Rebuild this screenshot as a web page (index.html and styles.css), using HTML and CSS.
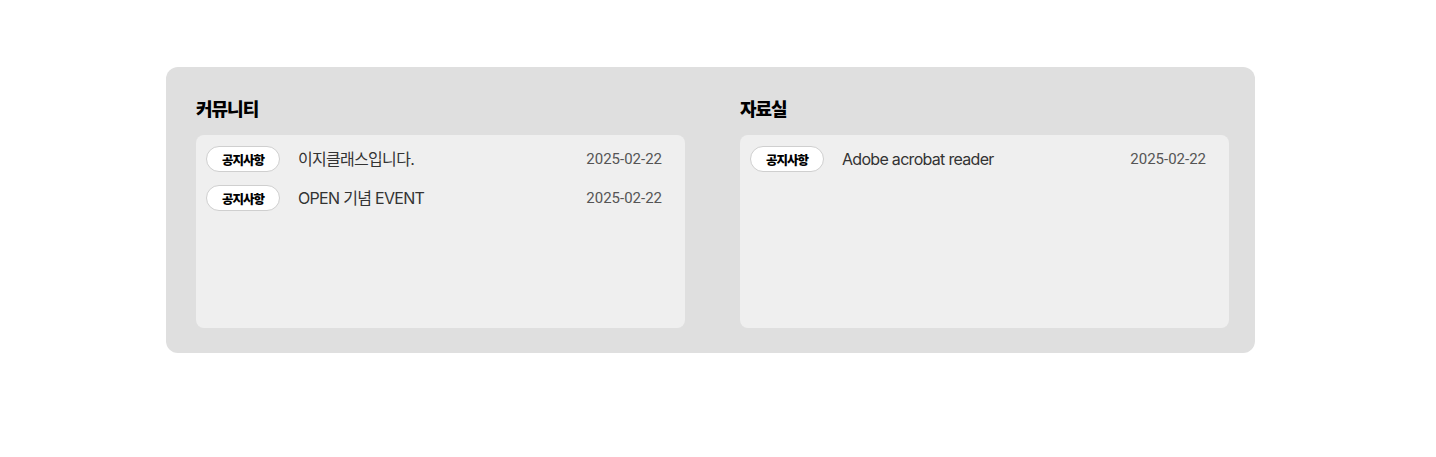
FILE: index.html
```html
<!DOCTYPE html>
<html lang="ko">
<head>
<meta charset="utf-8">
<title>커뮤니티 / 자료실</title>
<link rel="stylesheet" href="styles.css">
</head>
<body>
  <section class="board">
    <div class="col">
      <h2 class="col-title">커뮤니티</h2>
      <ul class="list">
        <li class="item">
          <span class="badge">공지사항</span>
          <span class="subject">이지클래스입니다.</span>
          <span class="date">2025-02-22</span>
        </li>
        <li class="item">
          <span class="badge">공지사항</span>
          <span class="subject">OPEN 기념 EVENT</span>
          <span class="date">2025-02-22</span>
        </li>
      </ul>
    </div>
    <div class="col">
      <h2 class="col-title">자료실</h2>
      <ul class="list">
        <li class="item">
          <span class="badge">공지사항</span>
          <span class="subject">Adobe acrobat reader</span>
          <span class="date">2025-02-22</span>
        </li>
      </ul>
    </div>
  </section>
</body>
</html>
```
FILE: styles.css
```css
* { box-sizing: border-box; }
html, body { margin: 0; padding: 0; background: #ffffff; }
body {
  font-family: "Noto Sans CJK KR", "Noto Sans", sans-serif;
  color: #333;
}
.board {
  width: 1089px;
  height: 286px;
  margin: 67px 0 0 166px;
  padding: 28px 26px 25px 30px;
  background: #dfdfdf;
  border-radius: 12px;
  display: grid;
  grid-template-columns: 489px 489px;
  column-gap: 55px;
}
.col { display: flex; flex-direction: column; }
.col-title {
  margin: 0 0 14px;
  font-size: 18px;
  line-height: 26px;
  font-weight: 900;
  letter-spacing: -1px;
  color: #000;
}
.list {
  list-style: none;
  margin: 0;
  padding: 11px 23px 0 10px;
  height: 193px;
  background: #efefef;
  border-radius: 8px;
  display: flex;
  flex-direction: column;
  gap: 13px;
}
.item {
  display: flex;
  align-items: center;
  height: 26px;
}
.badge {
  flex: 0 0 74px;
  height: 26px;
  display: flex;
  align-items: center;
  justify-content: center;
  background: #fff;
  border: 1px solid #cfcfcf;
  border-radius: 13px;
  font-size: 12.5px;
  font-weight: 900;
  letter-spacing: -1px;
  color: #000;
}
.subject {
  margin-left: 18px;
  flex: 1;
  font-family: "Inter", "Noto Sans CJK KR", sans-serif;
  font-size: 16px;
  line-height: 24px;
  letter-spacing: -0.7px;
  color: #333;
}
.date {
  font-family: "Roboto", "Noto Sans", sans-serif;
  font-size: 15px;
  line-height: 24px;
  color: #555;
}
```
